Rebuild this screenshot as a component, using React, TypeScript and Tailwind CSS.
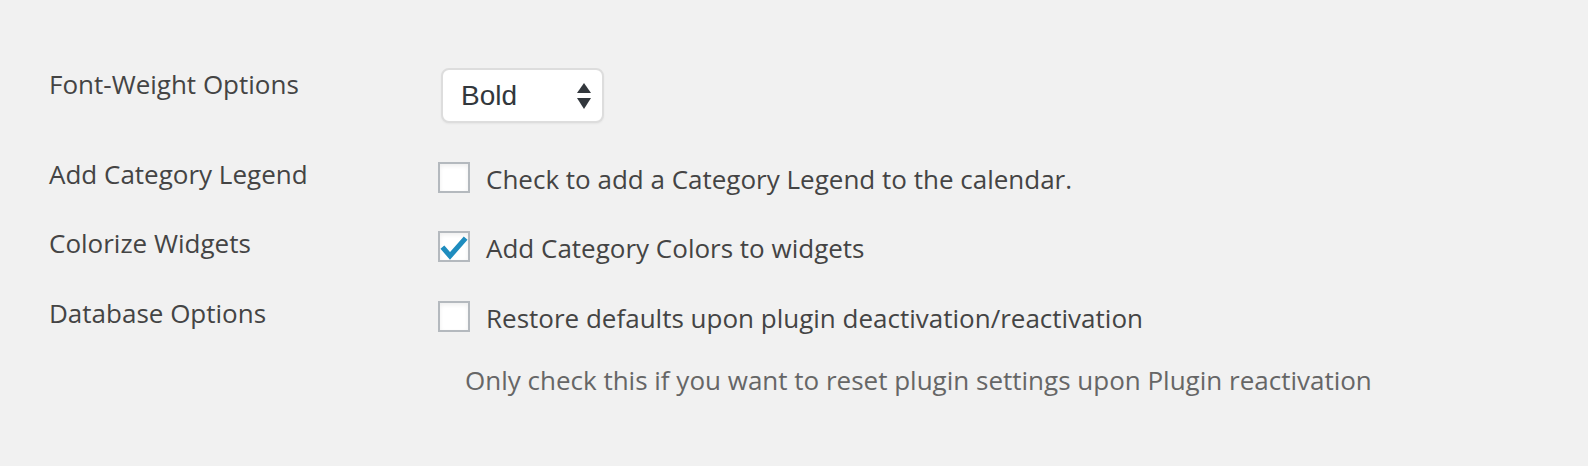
import { ReactNode } from "react";

const font = { fontFamily: '"Open Sans", "Noto Sans", sans-serif' };

function Checkbox({ checked }: { checked?: boolean }) {
  return (
    <span className="relative mt-[1px] inline-block w-[32px] h-[31px] shrink-0 bg-white border-2 border-[#b4b9be] shadow-[inset_0_2px_4px_rgba(0,0,0,0.07)]">
      {checked && (
        <svg className="absolute -left-[2px] -top-[2px]" width={32} height={31} viewBox="0 0 32 31">
          <polyline
            points="6,18 12,25 26,9"
            fill="none"
            stroke="#1e8cbe"
            strokeWidth={5}
            strokeLinecap="square"
            strokeLinejoin="miter"
          />
        </svg>
      )}
    </span>
  );
}

function Row({ label, children, className = "" }: { label: string; children: ReactNode; className?: string }) {
  return (
    <div className={`flex items-start ${className}`}>
      <div className="w-[389px] shrink-0 text-[26px] leading-[36px] text-[#444]">{label}</div>
      <div>{children}</div>
    </div>
  );
}

function CheckRow({ checked, text }: { checked?: boolean; text: string }) {
  return (
    <label className="flex items-start gap-[16px] pt-[5px] text-[26px] leading-[36px] text-[#444]">
      <Checkbox checked={checked} />
      <span>{text}</span>
    </label>
  );
}

export default function App() {
  return (
    <div className="min-h-[466px] w-full bg-[#f1f1f1] pl-[49px] pt-[66px]" style={font}>
      <Row label="Font-Weight Options">
        <div className="ml-[3px] mt-[2px] flex h-[55px] w-[163px] items-center justify-between rounded-[8px] border-2 border-[#dddddd] bg-white pl-[18px] pr-[11px] shadow-[0_1px_2px_rgba(0,0,0,0.05)]">
          <span className="text-[28px] text-[#32373c]" style={{ fontFamily: '"Liberation Sans", Arial, sans-serif' }}>
            Bold
          </span>
          <svg width={14} height={26} viewBox="0 0 14 26">
            <polygon points="7,0 14,10 0,10" fill="#32373c" />
            <polygon points="0,15 14,15 7,26" fill="#32373c" />
          </svg>
        </div>
      </Row>
      <Row label="Add Category Legend" className="mt-[33px]">
        <CheckRow text="Check to add a Category Legend to the calendar." />
      </Row>
      <Row label="Colorize Widgets" className="mt-[28px]">
        <CheckRow checked text="Add Category Colors to widgets" />
      </Row>
      <Row label="Database Options" className="mt-[29px]">
        <CheckRow text="Restore defaults upon plugin deactivation/reactivation" />
        <p className="ml-[27px] mt-[26px] text-[26px] leading-[36px] text-[#666]">
          Only check this if you want to reset plugin settings upon Plugin reactivation
        </p>
      </Row>
    </div>
  );
}
